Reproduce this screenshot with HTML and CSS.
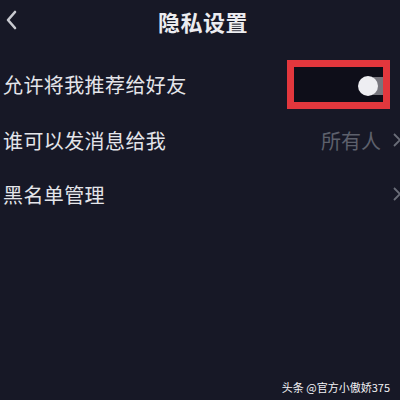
FILE: index.html
```html
<!DOCTYPE html>
<html lang="zh-CN">
<head>
    <meta charset="UTF-8">
    <title>隐私设置</title>
    <link rel="stylesheet" href="styles.css">
</head>
<body>
    <div class="screen">
        <div class="nav-bar">
            <svg class="back-icon" width="14" height="22" viewBox="0 0 14 22">
                <path d="M11 3 L4 11 L11 19" fill="none" stroke="#c9cad0" stroke-width="2.6" stroke-linecap="round" stroke-linejoin="round"/>
            </svg>
            <h1 class="nav-title">隐私设置</h1>
        </div>

        <div class="setting-list">
            <div class="setting-row">
                <span class="setting-label">允许将我推荐给好友</span>
                <div class="highlight-box">
                    <span class="switch-track"></span>
                    <span class="switch-knob"></span>
                </div>
            </div>
            <div class="setting-row">
                <span class="setting-label">谁可以发消息给我</span>
                <span class="setting-value">所有人</span>
                <svg class="chevron" width="9" height="16" viewBox="0 0 9 16">
                    <path d="M2 2 L8 8 L2 14" fill="none" stroke="#6a6d78" stroke-width="1.8"/>
                </svg>
            </div>
            <div class="setting-row">
                <span class="setting-label">黑名单管理</span>
                <svg class="chevron" width="9" height="16" viewBox="0 0 9 16">
                    <path d="M2 2 L8 8 L2 14" fill="none" stroke="#6a6d78" stroke-width="1.8"/>
                </svg>
            </div>
        </div>

        <div class="watermark">头条 @官方小傲娇375</div>
    </div>
</body>
</html>
```

FILE: styles.css
```css
* {
    box-sizing: border-box;
    font-family: "Noto Sans CJK SC", "Liberation Sans", sans-serif;
}

body {
    margin: 0;
    background: #171826;
}

.screen {
    width: 400px;
    height: 400px;
    display: flex;
    flex-direction: column;
    background: #171826;
    color: #e6e7ec;
    overflow: hidden;
}

.nav-bar {
    position: relative;
    height: 42px;
    display: flex;
    align-items: center;
    justify-content: center;
}

.back-icon {
    position: absolute;
    left: 4px;
    top: 9px;
}

.nav-title {
    margin: 0 0 0 6px;
    font-size: 22px;
    font-weight: 700;
    color: #ececf0;
    letter-spacing: 0.5px;
}

.setting-list {
    display: flex;
    flex-direction: column;
    margin-top: 14px;
}

.setting-row {
    height: 56px;
    display: flex;
    align-items: center;
    padding-left: 3px;
}

.setting-row:last-child {
    height: 52px;
}

.setting-label {
    flex: 1;
    font-size: 20px;
    color: #e4e5ea;
    letter-spacing: 0.4px;
}

.setting-value {
    font-size: 20px;
    color: #5d606c;
    margin-right: 11px;
}

.chevron {
    flex: none;
    margin-right: -1px;
}

.highlight-box {
    position: relative;
    width: 103px;
    height: 49px;
    margin-right: 10px;
    border: 7px solid #e2373d;
    background: #0e0e19;
}

.switch-track {
    position: absolute;
    right: 0;
    top: 10px;
    width: 10px;
    height: 18px;
    background: #77767e;
}

.switch-knob {
    position: absolute;
    right: 5px;
    top: 9px;
    width: 20px;
    height: 20px;
    border-radius: 50%;
    background: #eeeef2;
}

.watermark {
    margin-top: auto;
    align-self: flex-end;
    margin-right: 10px;
    margin-bottom: 5px;
    font-size: 11px;
    color: #f2f2f5;
}
```
